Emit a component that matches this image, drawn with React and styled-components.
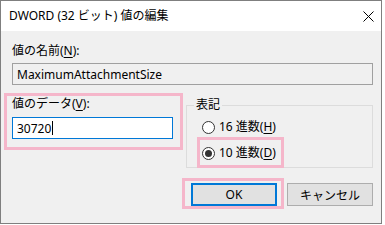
import React from 'react';
import styled, { createGlobalStyle } from 'styled-components';

const GlobalStyle = createGlobalStyle`
  html, body {
    margin: 0;
    padding: 0;
    background: #ffffff;
  }
  body {
    font-family: "Noto Sans", "Noto Sans CJK JP", sans-serif;
    font-size: 12px;
    color: #000;
  }
`;

const Window = styled.div`
  width: 382px;
  height: 224px;
  box-sizing: border-box;
  border: 1px solid #7f7f7f;
  display: flex;
  flex-direction: column;
  background: #f0f0f0;
`;

const TitleBar = styled.div`
  height: 30px;
  flex: none;
  background: #ffffff;
  display: flex;
  align-items: center;
  justify-content: space-between;
  padding: 0 7px 0 8px;
  line-height: 16px;
`;

const Body = styled.div`
  flex: 1;
  display: flex;
  flex-direction: column;
  padding: 12px 8px 15px 11px;
`;

const Label = styled.div`
  line-height: 16px;
  height: 16px;
  white-space: nowrap;
`;

const Key = styled.span`
  text-decoration: underline;
  text-underline-offset: 2px;
`;

const Field = styled.div`
  margin-top: ${p => p.$gap || 4}px;
  height: 22px;
  box-sizing: border-box;
  border: 1px solid ${p => (p.$focused ? '#0078d7' : '#a0a0a0')};
  background: ${p => (p.$focused ? '#ffffff' : '#f0f0f0')};
  padding: 0 4px;
  display: flex;
  align-items: center;
  white-space: nowrap;
`;

const Caret = styled.span`
  display: inline-block;
  width: 1px;
  height: 14px;
  margin-left: 1px;
  background: #000;
`;

const Row = styled.div`
  display: flex;
  align-items: flex-start;
  gap: 13px;
  margin-top: 11px;
`;

const Highlight = styled.div`
  position: relative;
  display: ${p => p.$inline ? 'inline-flex' : 'block'};
  &::after {
    content: '';
    position: absolute;
    top: ${p => p.$t}px;
    right: ${p => p.$r}px;
    bottom: ${p => p.$b}px;
    left: ${p => p.$l}px;
    border: 3px solid #f5b6ca;
    pointer-events: none;
  }
`;

const DataColumn = styled(Highlight)`
  width: 161px;
  flex: none;
`;

const GroupBox = styled.fieldset`
  flex: 1;
  margin: 0;
  padding: 0 0 6px 0;
  border: 1px solid #dcdcdc;
  min-width: 0;
`;

const Legend = styled.legend`
  margin-left: 7px;
  padding: 0 2px;
  line-height: 18px;
`;

const RadioList = styled.div`
  display: flex;
  flex-direction: column;
  align-items: flex-start;
  gap: 10px;
  padding: 5px 0 0 15px;
`;

const RadioRow = styled.div`
  display: flex;
  align-items: center;
  gap: 4px;
  height: 16px;
  line-height: 16px;
  white-space: nowrap;
`;

const RadioCircle = styled.span`
  width: 13px;
  height: 13px;
  box-sizing: border-box;
  border-radius: 50%;
  border: 1px solid #333333;
  background: #ffffff;
  display: inline-flex;
  align-items: center;
  justify-content: center;
  &::after {
    content: '';
    width: 7px;
    height: 7px;
    border-radius: 50%;
    background: #333333;
    display: ${p => (p.$checked ? 'block' : 'none')};
  }
`;

const ButtonRow = styled.div`
  display: flex;
  justify-content: flex-end;
  gap: 10px;
  margin-top: 15px;
`;

const Button = styled.button`
  width: 86px;
  height: 23px;
  box-sizing: border-box;
  margin: 0;
  padding: 0;
  font: inherit;
  color: #000;
  background: #e1e1e1;
  border: ${p => (p.$primary ? '2px solid #0078d7' : '1px solid #adadad')};
`;

const CloseIcon = () => (
  <svg width="11" height="11" viewBox="0 0 11 11">
    <path d="M0.5 0.5 L10.5 10.5 M10.5 0.5 L0.5 10.5" stroke="#000" strokeWidth="1" fill="none" />
  </svg>
);

export default function App() {
  return (
    <>
      <GlobalStyle />
      <Window>
        <TitleBar>
          <span>DWORD (32 ビット) 値の編集</span>
          <CloseIcon />
        </TitleBar>
        <Body>
          <Label>値の名前(<Key>N</Key>):</Label>
          <Field>MaximumAttachmentSize</Field>
          <Row>
            <DataColumn $t={-3} $r={-10} $b={-11} $l={-8}>
              <Label>値のデータ(<Key>V</Key>):</Label>
              <Field $focused $gap={5}>
                30720
                <Caret />
              </Field>
            </DataColumn>
            <GroupBox>
              <Legend>表記</Legend>
              <RadioList>
                <RadioRow>
                  <RadioCircle />
                  <span>16 進数(<Key>H</Key>)</span>
                </RadioRow>
                <Highlight $t={-8} $r={-8} $b={-7} $l={-5}>
                  <RadioRow>
                    <RadioCircle $checked />
                    <span>10 進数(<Key>D</Key>)</span>
                  </RadioRow>
                </Highlight>
              </RadioList>
            </GroupBox>
          </Row>
          <ButtonRow>
            <Highlight $inline $t={-5} $r={-7} $b={-3} $l={-9}>
              <Button $primary>OK</Button>
            </Highlight>
            <Button>キャンセル</Button>
          </ButtonRow>
        </Body>
      </Window>
    </>
  );
}
